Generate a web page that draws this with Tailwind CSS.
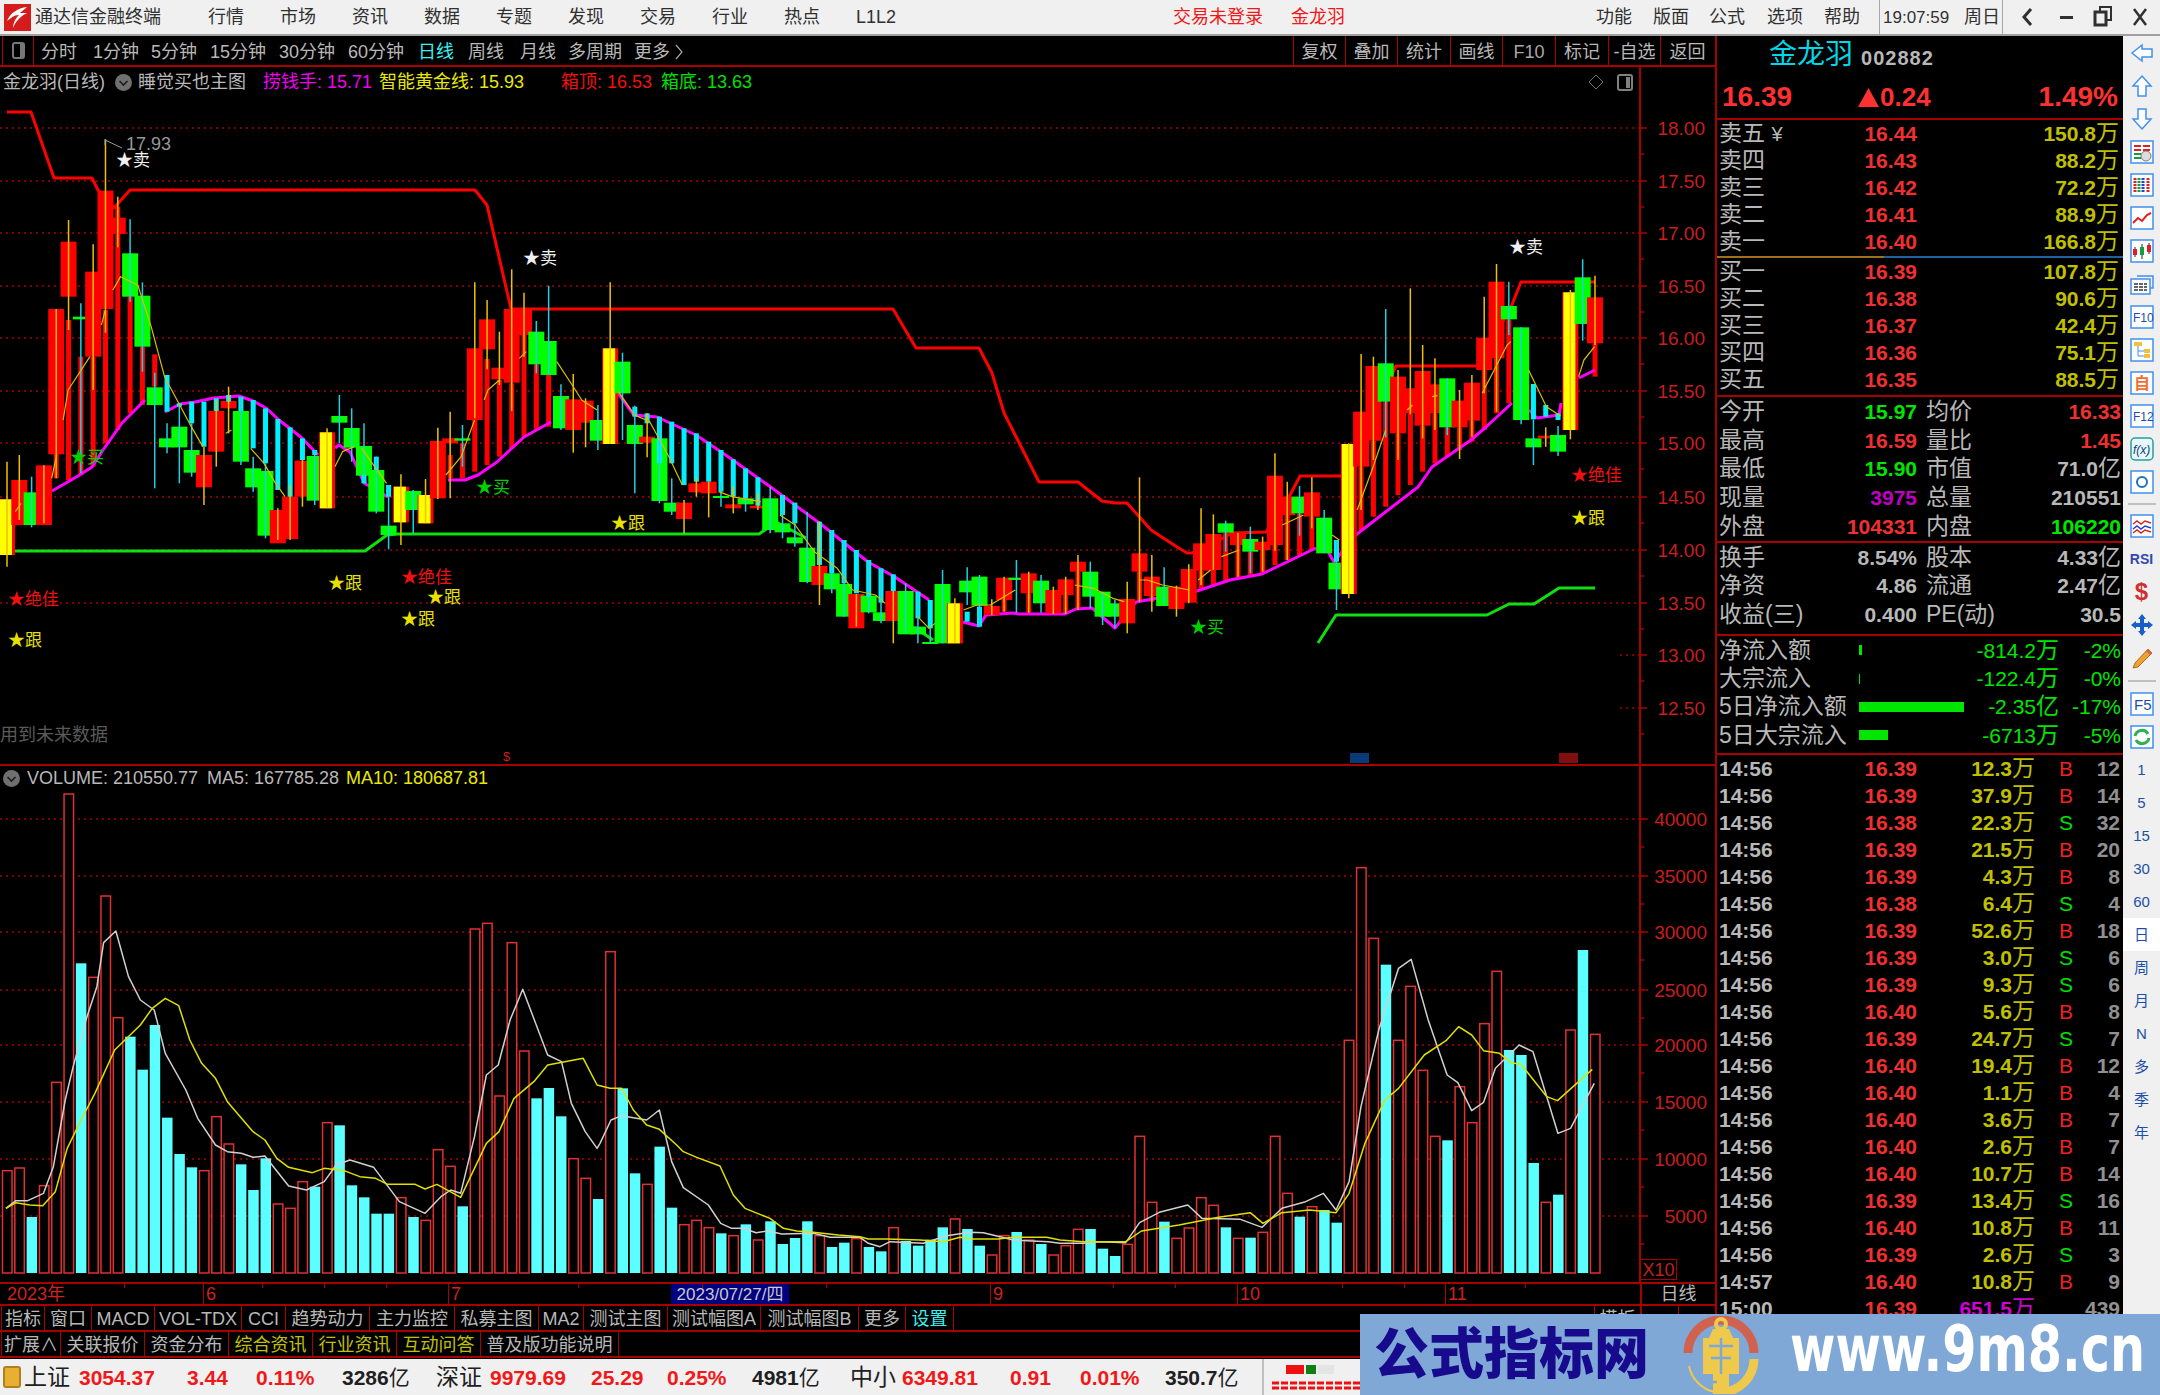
<!DOCTYPE html>
<html>
<head>
<meta charset="utf-8">
<title>通达信金融终端</title>
<script src="https://cdn.jsdelivr.net/npm/@tailwindcss/browser@4"></script>
</head>
<body class="bg-black overflow-hidden">
<div class="relative flex flex-col w-[2160px] h-[1395px] overflow-hidden bg-black text-[#b8b8b8] [font-family:'Liberation_Sans','Noto_Sans_CJK_SC',sans-serif]">

  <!-- title bar -->
  <div class="flex items-center h-[36px] bg-[#f0f0f0] border-b-2 border-[#a0a0a0] text-[18px] text-[#303030] leading-none">
    <svg class="ml-[4px]" width="27" height="27" viewBox="0 0 27 27"><rect width="27" height="27" fill="#d41c1c"/><path d="M23 3C14 4 6 9 3 17L7 14C9 12 12 11 15 11C12 14 9 19 9 24C11 19 15 13 23 9C20 9 18 9 16 9C18 7 21 5 23 3Z" fill="#fff"/></svg>
    <span class="ml-[4px] w-[173px]">通达信金融终端</span>
    <span class="w-[72px]">行情</span><span class="w-[72px]">市场</span><span class="w-[72px]">资讯</span><span class="w-[72px]">数据</span><span class="w-[72px]">专题</span><span class="w-[72px]">发现</span><span class="w-[72px]">交易</span><span class="w-[72px]">行业</span><span class="w-[72px]">热点</span><span class="w-[317px]">L1L2</span>
    <span class="w-[118px] text-[#f01818]">交易未登录</span><span class="w-[305px] text-[#f01818]">金龙羽</span>
    <span class="w-[57px]">功能</span><span class="w-[56px]">版面</span><span class="w-[58px]">公式</span><span class="w-[57px]">选项</span><span class="w-[55px]">帮助</span>
    <span class="h-[34px] w-[85px] pl-[3px] flex items-center border-l border-[#a8a8a8] text-[17px]">19:07:59</span><span class="h-[34px] w-[39px] flex items-center border-r border-[#a8a8a8]">周日</span>
    <svg width="156" height="34" viewBox="0 0 156 34"><path d="M28 9L21 17L28 25" fill="none" stroke="#303030" stroke-width="3"/><rect x="57" y="16" width="13" height="3" fill="#303030"/><rect x="92" y="12" width="11" height="13" fill="none" stroke="#303030" stroke-width="3"/><path d="M97 11V7H108V20H104" fill="none" stroke="#303030" stroke-width="2"/><path d="M131 9L143 25M143 9L131 25" stroke="#303030" stroke-width="2.5"/></svg>
  </div>

  <div class="flex h-[1323px]">
    <!-- left: charts -->
    <div class="flex flex-col w-[1715px]">
      <!-- period toolbar -->
      <div class="flex items-center h-[31px] border-b-2 border-[#a80000] text-[18px] leading-none">
        <span class="flex items-center justify-center ml-[2px] w-[32px] h-[29px] border-x border-[#a80000]"><span class="block w-[13px] h-[17px] rounded-[3px] border-2 border-[#777] border-r-[5px]"></span></span>
        <span class="ml-[7px] w-[52px] pt-[2px]">分时</span><span class="w-[58px] pt-[2px]">1分钟</span><span class="w-[59px] pt-[2px]">5分钟</span><span class="w-[69px] pt-[2px]">15分钟</span><span class="w-[69px] pt-[2px]">30分钟</span><span class="w-[70px] pt-[2px]">60分钟</span><span class="w-[50px] pt-[2px] text-[#3cf0f0]">日线</span><span class="w-[52px] pt-[2px]">周线</span><span class="w-[48px] pt-[2px]">月线</span><span class="w-[66px] pt-[2px]">多周期</span>
        <span class="flex items-center gap-[5px] w-[659px] pt-[2px]">更多<svg width="8" height="18" viewBox="0 0 8 18"><path d="M1 2L7 9L1 16" fill="none" stroke="#a8a8a8" stroke-width="1.2"/></svg></span>
        <span class="flex items-center justify-center w-[52px] h-[29px] pt-[2px] border-l border-[#a80000]">复权</span><span class="flex items-center justify-center w-[52px] h-[29px] pt-[2px] border-l border-[#a80000]">叠加</span><span class="flex items-center justify-center w-[53px] h-[29px] pt-[2px] border-l border-[#a80000]">统计</span><span class="flex items-center justify-center w-[52px] h-[29px] pt-[2px] border-l border-[#a80000]">画线</span><span class="flex items-center justify-center w-[53px] h-[29px] pt-[2px] border-l border-[#a80000] text-[#a8a8a8]">F10</span><span class="flex items-center justify-center w-[53px] h-[29px] pt-[2px] border-l border-[#a80000]">标记</span><span class="flex items-center justify-center w-[52px] h-[29px] pt-[2px] border-l border-[#a80000]">-自选</span><span class="flex items-center justify-center w-[54px] h-[29px] pt-[2px] border-l border-[#a80000]">返回</span>
      </div>

      <!-- price pane -->
      <div class="relative h-[697px]">
        <svg id="price" class="block" width="1715" height="697" viewBox="0 67 1715 697"></svg>
        <div class="absolute left-[3px] top-[5px] flex items-center h-[20px] text-[18px] leading-none whitespace-nowrap">
          <span class="w-[112px]">金龙羽(日线)</span>
          <svg class="mr-[6px]" width="17" height="17" viewBox="0 0 17 17"><circle cx="8.5" cy="8.5" r="8.5" fill="#707070"/><path d="M4.5 7L8.5 11L12.5 7" fill="none" stroke="#1c1c1c" stroke-width="1.6"/></svg>
          <span class="w-[125px]">睡觉买也主图</span>
          <span class="w-[116px] text-[#f000f0]">捞钱手: 15.71</span>
          <span class="w-[182px] text-[#e8e800]">智能黄金线: 15.93</span>
          <span class="w-[100px] text-[#f01010]">箱顶: 16.53</span>
          <span class="text-[#00e000]">箱底: 13.63</span>
        </div>
        <svg class="absolute left-[1587px] top-[5px]" width="48" height="20" viewBox="0 0 48 20"><path d="M9 3L16 10L9 17L2 10Z" fill="none" stroke="#707070"/><rect x="31" y="3" width="14" height="15" rx="2" fill="none" stroke="#808080" stroke-width="2"/><rect x="39" y="5" width="4" height="11" fill="#808080"/></svg>
      </div>

      <!-- volume pane -->
      <div class="relative h-[518px]">
        <svg id="volume" class="block" width="1715" height="518" viewBox="0 764 1715 518"></svg>
        <div class="absolute left-[3px] top-[4px] flex items-center h-[20px] text-[18px] leading-none whitespace-nowrap">
          <svg class="mr-[7px]" width="17" height="17" viewBox="0 0 17 17"><circle cx="8.5" cy="8.5" r="8.5" fill="#707070"/><path d="M4.5 7L8.5 11L12.5 7" fill="none" stroke="#1c1c1c" stroke-width="1.6"/></svg>
          <span class="w-[180px]">VOLUME: 210550.77</span>
          <span class="w-[139px]">MA5: 167785.28</span>
          <span class="text-[#e8e800]">MA10: 180687.81</span>
        </div>
        <span class="absolute left-[1640px] bottom-[2px] flex items-center justify-center w-[37px] h-[21px] border border-[#a80000] text-[18px] leading-none text-[#c02020]">X10</span>
      </div>

      <!-- date axis -->
      <div id="dates" class="relative flex h-[24px] border-y-2 border-[#a80000] text-[18px] leading-none text-[#d02020]">
        <span class="flex items-center w-[203px] pl-[7px]">2023年</span>
        <span class="flex items-center w-[245px] pl-[2px] border-l border-[#a80000]">6</span>
        <span class="flex items-center w-[542px] pl-[2px] border-l border-[#a80000]">7</span>
        <span class="flex items-center w-[247px] pl-[2px] border-l border-[#a80000]">9</span>
        <span class="flex items-center w-[208px] pl-[2px] border-l border-[#a80000]">10</span>
        <span class="flex items-center w-[195px] pl-[2px] border-l border-[#a80000]">11</span>
        <span class="flex items-center justify-center flex-1 border-l-2 border-[#a80000] text-[#b8b8b8]">日线</span>
        <span class="absolute left-[671px] top-0 flex items-center justify-center w-[118px] h-[20px] bg-[#000080] text-[#c8c8c8] text-[17px]">2023/07/27/四</span>
      </div>

      <!-- indicator tabs -->
      <div class="flex h-[26px] border-b-2 border-[#a80000] text-[18px] leading-none">
        <span class="flex items-center justify-center ml-[1px] w-[44px] pt-[2px] border-x border-[#a80000]">指标</span><span class="flex items-center justify-center w-[47px] pt-[2px] border-r border-[#a80000]">窗口</span><span class="flex items-center justify-center w-[63px] pt-[2px] border-r border-[#a80000]">MACD</span><span class="flex items-center justify-center w-[87px] pt-[2px] border-r border-[#a80000]">VOL-TDX</span><span class="flex items-center justify-center w-[44px] pt-[2px] border-r border-[#a80000]">CCI</span><span class="flex items-center justify-center w-[84px] pt-[2px] border-r border-[#a80000]">趋势动力</span><span class="flex items-center justify-center w-[85px] pt-[2px] border-r border-[#a80000]">主力监控</span><span class="flex items-center justify-center w-[84px] pt-[2px] border-r border-[#a80000]">私募主图</span><span class="flex items-center justify-center w-[45px] pt-[2px] border-r border-[#a80000]">MA2</span><span class="flex items-center justify-center w-[84px] pt-[2px] border-r border-[#a80000]">测试主图</span><span class="flex items-center justify-center w-[93px] pt-[2px] border-r border-[#a80000]">测试幅图A</span><span class="flex items-center justify-center w-[98px] pt-[2px] border-r border-[#a80000]">测试幅图B</span><span class="flex items-center justify-center w-[47px] pt-[2px] border-r border-[#a80000]">更多</span><span class="flex items-center justify-center w-[48px] pt-[2px] border-r border-[#a80000] text-[#3cf0f0]">设置</span>
        <span class="flex items-center justify-center ml-auto w-[46px] pt-[2px] border-l border-[#a80000]">模板</span><span class="flex items-center justify-center w-[38px] pt-[2px] border-l-2 border-[#a80000]">+</span><span class="w-[37px] border-l border-[#a80000]"></span>
      </div>
      <div class="flex h-[26px] border-b-2 border-[#a80000] text-[18px] leading-none">
        <span class="flex items-center justify-center ml-[1px] w-[60px] pt-[2px] border-x border-[#a80000]">扩展∧</span><span class="flex items-center justify-center w-[84px] pt-[2px] border-r border-[#a80000]">关联报价</span><span class="flex items-center justify-center w-[84px] pt-[2px] border-r border-[#a80000]">资金分布</span><span class="flex items-center justify-center w-[84px] pt-[2px] border-r border-[#a80000] text-[#c0c000]">综合资讯</span><span class="flex items-center justify-center w-[84px] pt-[2px] border-r border-[#a80000] text-[#c0c000]">行业资讯</span><span class="flex items-center justify-center w-[84px] pt-[2px] border-r border-[#a80000] text-[#c0c000]">互动问答</span><span class="flex items-center justify-center w-[138px] pt-[2px] border-r border-[#a80000]">普及版功能说明</span>
      </div>
    </div>

    <!-- right: quote panel -->
    <div class="w-[408px] overflow-hidden border-l-2 border-[#a80000]">
      <div class="flex items-center h-[38px] pl-[52px] leading-none">
        <span class="text-[28px] text-[#00d8e8]">金龙羽</span><span class="ml-[8px] mt-[6px] text-[20px] font-bold tracking-[1px]">002882</span>
      </div>
      <div class="flex items-center h-[46px] pr-[5px] pl-[5px] pt-[2px] border-b-2 border-[#a80000] text-[28px] font-bold leading-none text-[#ff3030]">
        <span class="w-[136px]">16.39</span><svg class="mr-[1px]" width="21" height="20" viewBox="0 0 21 20"><path d="M10.5 1L21 20H0Z" fill="#ff3030"/></svg><span class="text-[26px]">0.24</span><span class="ml-auto">1.49%</span>
      </div>
      <div id="asks" class="h-[136px]"></div>
      <div class="flex h-[2px]"><span class="w-[167px] bg-[#a07020]"></span><span class="flex-1 bg-[#2060a0]"></span></div>
      <div id="bids" class="h-[139px] border-b-2 border-[#a80000]"></div>
      <div id="stats1" class="h-[146px] border-b-2 border-[#a80000]"></div>
      <div id="stats2" class="h-[93px] border-b-2 border-[#a80000]"></div>
      <div id="flows" class="h-[119px] border-b-2 border-[#a80000]"></div>
      <div id="ticks"></div>
    </div>

    <!-- right: icon strip -->
    <div class="flex flex-col items-center w-[37px] bg-[#f0f0f0] text-[15px] leading-none text-[#1c50a8]">
      <span class="flex items-center justify-center h-[33px]"><svg width="24" height="24" viewBox="0 0 24 24"><path d="M2 12L12 4V8H22V16H12V20Z" fill="#fff" stroke="#4090f0" stroke-width="1.5"/></svg></span>
      <span class="flex items-center justify-center h-[33px]"><svg width="24" height="24" viewBox="0 0 24 24"><path d="M12 2L21 12H16V22H8V12H3Z" fill="#fff" stroke="#4090f0" stroke-width="1.5"/></svg></span>
      <span class="flex items-center justify-center h-[33px]"><svg width="24" height="24" viewBox="0 0 24 24"><path d="M12 22L21 12H16V2H8V12H3Z" fill="#fff" stroke="#4090f0" stroke-width="1.5"/></svg></span>
      <span class="flex items-center justify-center h-[33px]"><svg width="24" height="24" viewBox="0 0 24 24"><rect x="1" y="1" width="22" height="22" fill="#fff" stroke="#4090f0" stroke-width="1.5"/><path d="M4 6H11M13 6H20M4 10H11M13 10H20" stroke="#e02020" stroke-width="2"/><path d="M4 14H11M4 18H11" stroke="#10a040" stroke-width="2"/><circle cx="16" cy="16" r="5" fill="#ddd" stroke="#777"/></svg></span>
      <span class="flex items-center justify-center h-[33px]"><svg width="24" height="24" viewBox="0 0 24 24"><rect x="1" y="1" width="22" height="22" fill="#fff" stroke="#4090f0" stroke-width="1.5"/><path d="M5 5V19" stroke="#e02020" stroke-width="3" stroke-dasharray="2 1"/><path d="M9 5V19" stroke="#10a040" stroke-width="3" stroke-dasharray="2 1"/><path d="M13 5V19" stroke="#2040d0" stroke-width="3" stroke-dasharray="2 1"/><path d="M18 5V19" stroke="#e02020" stroke-width="3" stroke-dasharray="2 1"/></svg></span>
      <span class="flex items-center justify-center h-[33px]"><svg width="24" height="24" viewBox="0 0 24 24"><rect x="1" y="1" width="22" height="22" fill="#fff" stroke="#4090f0" stroke-width="1.5"/><path d="M3 17L8 12L12 15L17 9L21 7" fill="none" stroke="#e02020" stroke-width="2"/></svg></span>
      <span class="flex items-center justify-center h-[33px]"><svg width="24" height="24" viewBox="0 0 24 24"><rect x="1" y="1" width="22" height="22" fill="#fff" stroke="#4090f0" stroke-width="1.5"/><path d="M5 8V18M12 5V20M19 4V15" stroke="#222"/><rect x="3" y="10" width="4" height="6" fill="#e02020"/><rect x="10" y="8" width="4" height="8" fill="#10a040"/><rect x="17" y="6" width="4" height="7" fill="#e02020"/></svg></span>
      <span class="flex items-center justify-center h-[33px]"><svg width="24" height="24" viewBox="0 0 24 24"><path d="M7 4H23V16H20" fill="none" stroke="#4090f0" stroke-width="1.5"/><rect x="1" y="7" width="19" height="15" fill="#fff" stroke="#4090f0" stroke-width="1.5"/><path d="M4 12H17M4 15H17M4 18H17" stroke="#666" stroke-width="2" stroke-dasharray="4 1"/></svg></span>
      <span class="flex items-center justify-center h-[33px]"><svg width="24" height="24" viewBox="0 0 24 24"><rect x="1" y="1" width="22" height="22" fill="#fff" stroke="#4090f0" stroke-width="1.5"/><text x="3" y="17" font-size="12" fill="#1c50a8">F10</text></svg></span>
      <span class="flex items-center justify-center h-[33px]"><svg width="24" height="24" viewBox="0 0 24 24"><rect x="1" y="1" width="22" height="22" fill="#fff" stroke="#4090f0" stroke-width="1.5"/><path d="M8 8V18H14M8 13H14" fill="none" stroke="#4090f0"/><rect x="4" y="4" width="8" height="4" fill="#f0c040"/><rect x="14" y="11" width="6" height="4" fill="#f0c040"/><rect x="14" y="16" width="6" height="4" fill="#f0c040"/></svg></span>
      <span class="flex items-center justify-center h-[33px]"><svg width="24" height="24" viewBox="0 0 24 24"><rect x="1" y="1" width="22" height="22" fill="#fff" stroke="#4090f0" stroke-width="1.5"/><text x="4" y="18" font-size="16" font-weight="bold" fill="#f07030">自</text></svg></span>
      <span class="flex items-center justify-center h-[33px]"><svg width="24" height="24" viewBox="0 0 24 24"><rect x="1" y="1" width="22" height="22" fill="#fff" stroke="#4090f0" stroke-width="1.5"/><text x="3" y="17" font-size="12" fill="#1c50a8">F12</text></svg></span>
      <span class="flex items-center justify-center h-[33px]"><svg width="24" height="24" viewBox="0 0 24 24"><rect x="1" y="1" width="22" height="22" rx="4" fill="#e8f8f8" stroke="#20a0a0" stroke-width="1.5"/><text x="3" y="17" font-size="12" font-style="italic" fill="#104080">f(x)</text></svg></span>
      <span class="flex items-center justify-center h-[33px]"><svg width="24" height="24" viewBox="0 0 24 24"><rect x="1" y="1" width="22" height="22" fill="#fff" stroke="#4090f0" stroke-width="1.5"/><circle cx="12" cy="12" r="5" fill="none" stroke="#2070c0" stroke-width="2"/></svg></span>
      <span class="flex items-center h-[11px]"><span class="block w-[28px] h-[2px] bg-[#c0c0c0]"></span></span>
      <span class="flex items-center justify-center h-[33px]"><svg width="24" height="24" viewBox="0 0 24 24"><rect x="1" y="1" width="22" height="22" fill="#fff" stroke="#4090f0" stroke-width="1.5"/><path d="M3 10L7 7L11 10L15 7L21 9" fill="none" stroke="#e02020" stroke-width="1.5"/><path d="M3 15L7 12L11 15L15 12L21 14" fill="none" stroke="#2040d0" stroke-width="1.5"/><path d="M3 19L7 16L11 19L15 16L21 18" fill="none" stroke="#e02020" stroke-width="1.5"/></svg></span>
      <span class="flex items-center justify-center h-[33px] text-[14px] font-bold text-[#3048b0]">RSI</span>
      <span class="flex items-center justify-center h-[33px] text-[24px] font-bold text-[#d03030]">$</span>
      <span class="flex items-center justify-center h-[33px]"><svg width="24" height="24" viewBox="0 0 24 24"><path d="M12 1L16 6H14V10H18V8L23 12L18 16V14H14V18H16L12 23L8 18H10V14H6V16L1 12L6 8V10H10V6H8Z" fill="#1860c8"/></svg></span>
      <span class="flex items-center justify-center h-[33px]"><svg width="24" height="24" viewBox="0 0 24 24"><path d="M5 17L18 3L22 7L8 21L3 22Z" fill="#f0a030" stroke="#a87020"/><path d="M18 3L22 7L20 9L16 5Z" fill="#e06050"/></svg></span>
      <span class="flex items-center h-[13px]"><span class="block w-[28px] h-[2px] bg-[#c0c0c0]"></span></span>
      <span class="flex items-center justify-center h-[33px]"><svg width="24" height="24" viewBox="0 0 24 24"><rect x="1" y="1" width="22" height="22" fill="#fff" stroke="#4090f0" stroke-width="1.5"/><text x="4" y="18" font-size="15" fill="#1c50a8">F5</text></svg></span>
      <span class="flex items-center justify-center h-[33px]"><svg width="24" height="24" viewBox="0 0 24 24"><rect x="1" y="1" width="22" height="22" fill="#fff" stroke="#4090f0" stroke-width="1.5"/><path d="M5 11A7 7 0 0 1 18 9M19 13A7 7 0 0 1 6 15" fill="none" stroke="#30b050" stroke-width="3"/></svg></span>
      <span class="flex items-center justify-center h-[33px]">1</span>
      <span class="flex items-center justify-center h-[33px]">5</span>
      <span class="flex items-center justify-center h-[33px]">15</span>
      <span class="flex items-center justify-center h-[33px]">30</span>
      <span class="flex items-center justify-center h-[33px]">60</span>
      <span class="flex items-center justify-center w-full h-[33px] bg-white">日</span>
      <span class="flex items-center justify-center h-[33px]">周</span>
      <span class="flex items-center justify-center h-[33px]">月</span>
      <span class="flex items-center justify-center h-[33px]">N</span>
      <span class="flex items-center justify-center h-[33px]">多</span>
      <span class="flex items-center justify-center h-[33px]">季</span>
      <span class="flex items-center justify-center h-[33px]">年</span>
    </div>
  </div>

  <!-- index status bar -->
  <div class="flex items-center h-[36px] bg-[#f0f0f0] text-[21px] font-bold leading-none text-[#f01818] whitespace-nowrap">
    <span class="w-[24px] pl-[3px]"><span class="block w-[18px] h-[22px] rounded-[3px] bg-[#e8b030] border-2 border-[#b08020]"></span></span>
    <span class="w-[55px] text-[23px] font-normal text-[#202020]">上证</span><span class="w-[108px]">3054.37</span><span class="w-[69px]">3.44</span><span class="w-[86px]">0.11%</span><span class="w-[94px] text-[#202020]">3286<span class="font-normal">亿</span></span>
    <span class="w-[54px] text-[23px] font-normal text-[#202020]">深证</span><span class="w-[101px]">9979.69</span><span class="w-[76px]">25.29</span><span class="w-[85px]">0.25%</span><span class="w-[98px] text-[#202020]">4981<span class="font-normal">亿</span></span>
    <span class="w-[52px] text-[23px] font-normal text-[#202020]">中小</span><span class="w-[108px]">6349.81</span><span class="w-[70px]">0.91</span><span class="w-[85px]">0.01%</span><span class="w-[97px] text-[#202020]">350.7<span class="font-normal">亿</span></span>
    <span class="flex h-full border-l-2 border-[#c0c0c0]"><svg width="98" height="36" viewBox="0 0 98 36"><rect x="22" y="6" width="18" height="9" fill="#f01010"/><rect x="42" y="6" width="10" height="9" fill="#108010"/><rect x="54" y="6" width="16" height="9" fill="#e4e4e4"/><path d="M8 24H96M8 29H96" stroke="#f01010" stroke-width="3" stroke-dasharray="7 2"/></svg></span>
  </div>

  <!-- site banner over the corner -->
  <div class="absolute left-[1360px] top-[1314px] flex items-center w-[800px] h-[81px] bg-[#7fa8d6] leading-none whitespace-nowrap">
    <span class="shrink-0 ml-[14px] w-[309px] text-[55px] font-black text-[#170a8c]">公式指标网</span>
    <svg class="shrink-0" width="76" height="78" viewBox="0 0 76 78"><path d="M5 37A33 33 0 0 1 71 37" fill="none" stroke="#d0634f" stroke-width="9"/><path d="M71 43A33 33 0 0 1 38 76" fill="none" stroke="#eec94b" stroke-width="9"/><path d="M32 76A33 33 0 0 1 6 50" fill="none" stroke="#eec94b" stroke-width="2"/><circle cx="38" cy="8" r="5" fill="none" stroke="#eec94b" stroke-width="4"/><path d="M30 13H46L50 22H56V58H46V78H30V58H20V22H26Z" fill="#eec94b"/><path d="M26 30H50M28 42H48M38 22V58M26 66H34" stroke="#7fa8d6" stroke-width="2.5"/></svg>
    <span class="shrink-0 ml-[31px] mb-[12px] text-[64px] font-bold text-white [font-family:'DejaVu_Sans',sans-serif] scale-x-[.77] origin-left">www.9m8.cn</span>
  </div>
</div>

<script>
  // pixel helpers, values below were read off 3x crops of the chart
  const barX = i => 2 + 12.31 * i
  const midX = i => barX(i) + 5
  const txt = (x, y, s, fill, size, anchor) => `<text x="${x}" y="${y}" fill="${fill}" font-size="${size}" text-anchor="${anchor || 'start'}">${s}</text>`
  const rect = (x, y, w, h, fill) => `<rect x="${x}" y="${y}" width="${w}" height="${Math.max(h, 2)}" fill="${fill}"/>`
  const vline = (x, a, b, col, w) => `<line x1="${x}" x2="${x}" y1="${a}" y2="${b}" stroke="${col}" stroke-width="${w}"/>`
  const line = (pts, col, w) => `<polyline points="${pts.map(p => p.join(',')).join(' ')}" fill="none" stroke="${col}" stroke-width="${w}" stroke-linejoin="round"/>`
  const dots = (a, b, y) => `<line x1="${a}" x2="${b}" y1="${y}" y2="${y}" stroke="#a80000" stroke-width="1.5" stroke-dasharray="2 4"/>`
  const crop = (pts, x0, sx, y0) => pts.map(p => [x0 + p[0] / sx, y0 + p[1] / 3])

  // candles: index, type, body top, body bottom, wick top, wick bottom
  const c7 = [[0,'y',1228,1395,1115,1430],[1,'r',1170,1305,1095,1290],[2,'g',1207,1305,1160,1312],[3,'r',1126,1305,1126,1300],[4,'r',657,1093,657,1165],[5,'r',455,620,390,720],[6,'g',680,688,640,1150],[7,'r',545,800,463,900],[8,'r',302,657,148,728],[9,'r',383,432,320,472],[10,'g',490,620,388,635],[11,'g',617,770,577,845],[12,'g',892,945,848,1195],[13,'g',1045,1072,1000,1090],[14,'g',1010,1072,940,1180],[15,'g',1080,1148,1000,1160],[16,'r',1095,1192,1070,1245],[17,'r',963,1085,930,1130],[18,'r',933,955,890,1030],[19,'g',963,1115,920,1125],[20,'g',1135,1192,1100,1205],[21,'g',1143,1337,1120,1345],[22,'r',1260,1360,1255,1350],[23,'r',1220,1347,1185,1350],[24,'r',1112,1220,1110,1250],[25,'g',1098,1232,1080,1245],[26,'y',1027,1255,1015,1255],[27,'g',978,998,915,1060],[28,'g',1014,1073,955,1115],[29,'g',1068,1157,1000,1175],[30,'g',1140,1265,1100,1270],[31,'g',1307,1335,1185,1378],[32,'y',1190,1297,1153,1365],[33,'g',1203,1260,1200,1330],[34,'y',1215,1300,1167,1300],[35,'r',1053,1225,1013,1227],[36,'r',1045,1060,965,1225],[37,'g',1045,1052,1005,1130],[38,'r',775,990,577,985],[39,'r',688,778,630,838],[40,'r',833,868,725,885],[41,'r',657,878,538,963],[42,'r',657,735,608,800],[43,'g',725,823,693,850],[44,'g',753,855,587,855],[45,'g',918,1015,883,1020],[46,'r',928,1020,852,1088],[47,'r',932,998,925,1072],[48,'g',990,1052,945,1080]]
  const c8 = [[49,'y',325,612,127,612],[50,'g',365,460,338,600],[51,'g',555,612,497,760],[52,'r',590,608,520,652],[53,'g',595,783,530,790],[54,'g',788,815,715,825],[55,'r',788,837,780,880],[56,'r',730,757,715,770],[57,'r',725,760,725,832],[58,'g',768,772,730,800],[59,'r',793,805,740,820],[60,'g',775,793,775,815],[61,'r',797,805,760,810],[62,'g',775,870,740,880],[63,'g',850,877,765,895],[64,'g',892,910,788,920],[65,'g',923,1026,815,1030],[66,'r',978,1035,845,1095],[67,'g',1000,1048,870,1060],[68,'g',1032,1130,900,1130],[69,'r',1062,1165,1062,1160],[70,'g',1067,1117,960,1120],[71,'g',1117,1143,985,1150],[72,'r',1053,1143,1053,1210],[73,'g',1053,1183,1030,1180],[74,'g',1160,1183,1055,1210],[75,'g',1206,1210,1160,1210],[76,'g',1032,1210,990,1210],[77,'y',1090,1210,1075,1210],[78,'g',1022,1057,982,1095],[79,'g',1010,1097,1005,1160],[80,'r',1098,1125,1078,1125],[81,'r',1013,1080,1010,1115],[82,'g',1013,1020,960,1118],[83,'r',1000,1060,995,1118],[84,'g',1022,1090,1005,1118],[85,'r',1050,1120,1040,1122],[86,'r',1018,1065,1010,1122],[87,'r',965,995,945,1110],[88,'g',995,1070,965,1105],[89,'g',1055,1130,1055,1155],[90,'g',1090,1130,1080,1165],[91,'r',1077,1150,1025,1180],[92,'r',940,995,712,1085],[93,'r',1010,1068,945,1115],[94,'g',1040,1098,982,1095],[95,'r',1040,1107,1037,1130],[96,'r',987,1088,973,1090]]
  const c9 = [[97,'r',940,1022,835,1065],[98,'r',912,1020,853,1020],[99,'g',880,908,872,965],[100,'r',912,945,908,1040],[101,'g',927,965,890,1030],[102,'r',935,960,920,1025],[103,'r',737,945,670,962],[104,'r',800,855,755,990],[105,'g',800,850,768,917],[106,'r',787,860,742,895],[107,'g',863,970,840,970],[108,'g',998,1078,930,1140],[109,'y',642,1092,640,1105],[110,'r',545,710,372,840],[111,'r',408,632,380,690],[112,'g',400,515,237,622],[113,'r',440,610,420,690],[114,'r',475,550,175,553],[115,'r',423,587,345,625],[116,'r',463,550,385,600],[117,'g',445,592,445,615],[118,'r',512,592,480,687],[119,'r',458,572,435,620],[120,'r',323,420,200,490],[121,'r',155,385,102,545],[122,'g',228,268,155,315],[123,'g',292,570,292,583],[124,'g',625,652,568,705],[125,'r',617,625,592,650],[126,'g',615,665,588,678],[127,'y',187,600,180,628],[128,'g',142,282,88,332],[129,'r',202,340,137,345]]

  // thin bars between the candles and the magenta line
  const red7 = [[4,1090,1165],[5,690,1170],[6,800,1155],[7,800,1130],[8,660,1060],[9,350,1020],[10,620,970],[11,770,945],[12,793,890],[36,1095,1165],[37,1060,1165],[38,990,1145],[39,807,1125],[40,870,1100],[41,880,1075],[42,735,1040],[43,823,1020],[44,855,1010]]
  const red8 = [[81,1080,1115],[83,1060,1118],[85,1100,1122],[86,1065,1122],[87,995,1110],[92,995,1085],[93,1068,1085]]
  const red9 = [[97,1022,1075],[98,1020,1065],[99,908,1055],[100,945,1048],[101,965,1040],[102,960,1030],[103,945,1005],[104,855,990],[105,850,975],[106,860,960],[110,710,900],[111,632,860],[112,515,830],[113,610,795],[114,550,765],[115,587,725],[116,550,700],[117,592,680],[118,592,660],[119,572,635],[120,420,600],[121,385,550],[122,268,520],[129,340,440]]
  const cyan7 = [[13,855,965],[14,940,950],[15,935,1000],[16,935,1070],[17,925,963],[18,915,935],[19,920,963],[20,930,1075],[21,955,1120],[22,987,1200],[23,1012,1220],[24,1045,1110],[25,1080,1095],[29,1155,1180],[30,1100,1140],[31,1185,1220]]
  const cyan8 = [[51,500,530],[52,520,550],[53,530,670],[54,545,670],[55,565,735],[56,580,725],[57,605,725],[58,630,755],[59,658,770],[60,685,775],[61,712,797],[63,765,825],[64,788,850],[66,845,975],[67,870,1000],[68,900,1030],[69,930,1060],[70,960,1070],[71,985,1088],[72,1003,1053],[74,1055,1135],[75,1080,1165],[78,1115,1145],[79,1100,1160]]
  const cyan9 = [[108,930,995],[124,462,568],[125,525,560],[126,550,570]]

  const upper = [[7,112],[31,112],[54,178],[92,178],[98,190],[114,208],[130,190],[475,190],[487,205],[511,309],[893,309],[916,348],[979,348],[992,373],[1004,413],[1039,482],[1078,482],[1102,501],[1115,503],[1127,503],[1151,530],[1177,547],[1187,553],[1192,553],[1223,538],[1232,533],[1266,532],[1289,497],[1300,476],[1343,476],[1396,366],[1477,366],[1511,307],[1521,282],[1595,282]]
  const magenta = [
    [[52,491],[78,476],[92,467],[103,450],[122,423],[145,400]],
    [[165,412],[180,404],[195,402],[214,398],[239,396],[253,401],[266,408],[279,420],[302,438],[318,455]],
    [[335,448],[339,445],[350,452],[364,483],[388,497]],
    [[448,480],[465,480],[478,475],[497,462],[524,437],[551,422]],
    [[618,393],[634,415],[657,417],[696,435],[730,458],[772,488],[822,525],[868,562],[895,577],[929,600]],
    [[963,622],[979,626],[986,615],[1013,613],[1019,614],[1065,614],[1076,609],[1092,608],[1115,628],[1136,602],[1153,599],[1197,591],[1230,580],[1262,574],[1316,548]],
    [[1327,550],[1334,562],[1345,548],[1357,534],[1379,517],[1418,487],[1432,467],[1471,440],[1486,427],[1512,403]],
    [[1529,410],[1537,418],[1559,415],[1561,403]],
    [[1579,378],[1595,370]]
  ]
  const green = [
    [[15,551],[365,551],[387,535],[398,534],[759,534],[768,528],[778,523],[806,538]],
    [[914,627],[933,640]],
    [[1318,643],[1336,615],[1487,615],[1509,604],[1534,604],[1559,588],[1595,588]]
  ]
  const ma7 = [[[40,1265],[55,1240]],[[135,1165],[148,1095]],[[165,990],[178,900],[235,800]],[[265,705],[275,660]],[[295,600],[315,560],[360,585],[395,710],[430,860],[495,1000],[530,1070]],[[590,1030],[605,1020]],[[655,1075],[690,1120],[720,1180],[745,1220]],[[875,1130],[895,1085],[925,1070]],[[945,1075],[1010,1180]],[[1165,1155],[1205,1100],[1240,990]],[[1265,930],[1275,900],[1305,870]],[[1357,805],[1375,785]],[[1455,815],[1495,885],[1520,930],[1560,960]]]
  const ma8 = [[[48,455],[90,525],[130,545],[180,650],[215,735]],[[310,755],[345,770],[420,785]],[[470,825],[510,855],[560,935],[620,985],[660,1050],[720,1065],[745,1090]],[[830,1130],[860,1165],[875,1150]],[[950,1110],[985,1095],[1020,1095],[1085,1050]],[[1240,1035],[1290,1045],[1340,1075],[1370,1085]],[[1410,1020],[1430,1020],[1470,1035],[1540,1050]]]
  const ma9 = [[[135,1050],[170,1020]],[[200,980],[250,960]],[[370,885],[430,855]],[[510,915],[530,930]],[[580,840],[625,710],[660,600]],[[720,540],[735,525]],[[790,500],[805,497]],[[930,490],[1000,345],[1010,335]],[[1060,420],[1110,530],[1150,558]],[[1200,440],[1215,390],[1245,350]]]

  // price pane
  let s = ''
  const grid = [128,181,233,286,338,391,443,497,550,603,655,708]
  grid.forEach((y, n) => {
    if (y < 600) s += dots(0, 1640, y)
    if (y == 603) s += dots(0, 814, y) + dots(1196, 1640, y)
    if (y > 650) s += dots(1620, 1640, y)
    s += txt(1705, y + 7, (18 - n * 0.5).toFixed(2), '#c81e1e', 19, 'end')
    s += `<line x1="1640" x2="1647" y1="${y}" y2="${y}" stroke="#a80000" stroke-width="1.5"/><line x1="1640" x2="1644" y1="${y + 26}" y2="${y + 26}" stroke="#a80000" stroke-width="1.5"/>`
  })
  s += line(upper, '#ff0000', 3)
  green.forEach(p => s += line(p, '#10e010', 3))
  const redBand = (list, y0) => list.forEach(b => s += rect(midX(b[0]) - 2.5, y0 + b[1] / 3, 5, (b[2] - b[1]) / 3, '#ff0000'))
  redBand(red7, 90); redBand(red8, 240); redBand(red9, 230)
  magenta.forEach(p => s += line(p, '#ff00ff', 3))
  const candles = (list, y0) => list.forEach(c => {
    const x = midX(c[0]), top = y0 + c[2] / 3, h = (c[3] - c[2]) / 3
    if (c[1] == 'r') s += rect(x - 8, top, 16, h, '#ff0000')
    if (c[1] == 'g') s += rect(x - 8, top, 16, h, '#00ff00')
    if (c[1] == 'y') s += rect(x - 8, top, 16, h, '#ff0000') + rect(x - 7, top, 12, h, '#ffff00')
  })
  candles(c7, 90); candles(c8, 240); candles(c9, 230)
  const cyanBand = (list, y0) => list.forEach(b => s += rect(midX(b[0]) - 2.5, y0 + b[1] / 3, 5, (b[2] - b[1]) / 3, '#00f0ff'))
  cyanBand(cyan7, 90); cyanBand(cyan8, 240); cyanBand(cyan9, 230)
  const wicks = (list, y0) => list.forEach(c => s += vline(midX(c[0]), y0 + c[4] / 3, y0 + c[5] / 3, c[1] == 'g' ? '#20d0e0' : '#f0c000', 1.5))
  wicks(c7, 90); wicks(c8, 240); wicks(c9, 230)
  ma7.forEach(p => s += line(crop(p, 0, 2.613, 90), '#d8c000', 1.2))
  ma8.forEach(p => s += line(crop(p, 600, 2.613, 240), '#d8c000', 1.2))
  ma9.forEach(p => s += line(crop(p, 1150, 2.8, 230), '#d8c000', 1.2))
  s += '<path d="M105 139V145M105 140L122 148" fill="none" stroke="#999"/>' + txt(126, 150, '17.93', '#999', 18)
  ;[[116,166,'★卖','#f0f0f0'],[523,264,'★卖','#f0f0f0'],[1509,253,'★卖','#f0f0f0'],[70,463,'★买','#00d000'],[476,493,'★买','#00d000'],[1190,633,'★买','#00d000'],[328,589,'★跟','#e8e000'],[8,646,'★跟','#e8e000'],[427,603,'★跟','#e8e000'],[401,625,'★跟','#e8e000'],[611,529,'★跟','#e8e000'],[1571,524,'★跟','#e8e000'],[401,583,'★绝佳','#f01010'],[8,605,'★绝佳','#f01010'],[1571,481,'★绝佳','#f01010']].forEach(l => s += txt(l[0], l[1], l[2], l[3], 17))
  s += txt(0, 741, '用到未来数据', '#5a5a5a', 18)
  s += txt(503, 761, '$', '#c02020', 13) + rect(1350, 753, 19, 10, '#0a3a78') + rect(1559, 753, 19, 10, '#801010')
  s += vline(1640, 67, 764, '#a80000', 2)
  document.getElementById('price').innerHTML = s

  // volume pane, tops in crop pixels over a base at 1540, minus means a cyan bar
  const vol = [1232,1224,-1371,1277,967,102,-610,652,408,773,-830,-929,-795,-1073,-1182,-1222,1232,1070,1152,-1213,-1290,-1195,1332,1345,1265,-1280,1088,-1096,-1276,-1312,-1361,-1361,1313,-1371,1381,1169,1219,-1339,507,490,1008,548,873,-1015,-984,-1069,1196,1255,-1317,575,-985,-1240,1273,-1160,-1343,1394,1381,1403,-1420,1427,-1393,1440,-1384,-1452,-1434,-1384,1427,-1461,-1448,1436,-1461,-1474,1403,-1443,-1457,-1439,-1402,1377,-1407,-1457,1485,1427,-1416,1440,-1452,1485,1457,1408,-1407,-1466,-1488,1453,1129,1327,-1385,1435,1404,1313,1336,-1402,1435,-1433,1417,1129,1300,-1370,1340,-1350,-1388,841,323,535,-614,841,679,931,1129,-1141,980,1088,791,634,-870,-885,-1209,1327,-1304,810,-570,823]
  let v = ''
  ;[1216,1159,1102,1045,990,932,876,819].forEach((y, n) => {
    v += dots(0, 1640, y) + txt(1707, y + 7, (n + 1) * 5000, '#c81e1e', 19, 'end')
    v += `<line x1="1640" x2="1648" y1="${y}" y2="${y}" stroke="#a80000" stroke-width="1.5"/><line x1="1640" x2="1644" y1="${y + 28}" y2="${y + 28}" stroke="#a80000" stroke-width="1.5"/>`
  })
  vol.forEach((t, i) => {
    const top = 760 + Math.abs(t) / 3
    if (t < 0) v += `<rect x="${barX(i)}" y="${top}" width="10.5" height="${1273 - top}" fill="#5cffff"/>`
    else v += `<rect x="${barX(i) + 0.5}" y="${top}" width="9.5" height="${1273 - top}" fill="#000" stroke="#e03030" stroke-width="1.5"/>`
  })
  const white = crop([[15,1345],[40,1322],[70,1322],[110,1300],[135,1220],[165,1020],[185,920],[220,770],[245,680],[262,548],[293,513],[325,650],[355,720],[390,750],[418,880],[470,990],[500,1075],[545,1155],[575,1175],[610,1180],[640,1192],[670,1188],[730,1278],[775,1290],[820,1265],[850,1215],[885,1200],[945,1222],[1010,1325],[1075,1360],[1115,1310],[1140,1290],[1165,1300],[1200,1130],[1230,945],[1260,915],[1290,780],[1322,688],[1385,885],[1420,905],[1445,1030],[1480,1115],[1510,1165]], 0, 2.529, 760)
    .concat(crop([[0,1150],[33,1080],[65,1067],[140,1080],[178,1050],[215,1205],[250,1283],[325,1335],[362,1390],[395,1405],[430,1405],[468,1418],[505,1413],[545,1422],[640,1420],[690,1432],[780,1432],[805,1450],[840,1460],[870,1445],[970,1450],[1040,1427],[1110,1417],[1150,1418],[1200,1430],[1240,1440],[1345,1445],[1380,1450],[1450,1450]], 600, 3, 760))
    .concat(crop([[0,1445],[65,1448],[100,1388],[150,1357],[222,1335],[258,1375],[355,1378],[410,1402],[460,1345],[520,1325],[565,1300],[597,1350],[630,1265],[660,1040],[705,810],[755,625],[787,598],[830,780],[878,945],[905,968],[940,1052],[970,1027],[1000,925],[1060,855],[1095,875],[1158,1120],[1190,1105],[1250,970]], 1100, 2.529, 760))
  const yellow = crop([[15,1345],[40,1328],[75,1335],[108,1337],[140,1295],[170,1165],[205,1080],[240,1000],[290,870],[355,795],[385,745],[418,715],[452,737],[480,840],[510,910],[545,955],[575,1025],[640,1115],[670,1140],[700,1195],[730,1222],[790,1238],[820,1225],[870,1232],[910,1250],[950,1255],[980,1273],[1050,1273],[1075,1287],[1105,1273],[1165,1312],[1230,1150],[1262,1115],[1300,1015],[1350,965],[1385,915],[1475,895],[1510,975]], 0, 2.529, 760)
    .concat(crop([[0,977],[30,985],[65,985],[100,1050],[140,1095],[178,1108],[230,1155],[250,1175],[290,1192],[360,1218],[400,1305],[435,1345],[510,1375],[550,1405],[590,1413],[640,1417],[715,1425],[780,1430],[805,1437],[860,1437],[960,1440],[1030,1445],[1080,1432],[1120,1437],[1195,1437],[1240,1432],[1340,1432],[1380,1440],[1450,1445]], 600, 3, 760))
    .concat(crop([[0,1445],[65,1445],[105,1413],[200,1395],[300,1372],[380,1358],[412,1390],[460,1358],[530,1350],[597,1358],[630,1300],[670,1150],[720,1020],[755,985],[820,885],[875,842],[907,800],[940,825],[970,872],[1010,880],[1040,908],[1065,913],[1130,1010],[1157,1022],[1245,928]], 1100, 2.529, 760))
  v += line(white, '#d0d0d0', 1.5) + line(yellow, '#e0e000', 1.5)
  v += `<line x1="0" x2="1715" y1="765" y2="765" stroke="#a80000" stroke-width="2"/>` + vline(1640, 764, 1282, '#a80000', 2)
  document.getElementById('volume').innerHTML = v

  // short ticks under the top of the date axis
  ;[124,262,324,386,578,702,826,1113,1175,1342,1404,1525].forEach(x => {
    dates.insertAdjacentHTML('beforeend', `<span class="absolute top-0 w-[1px] h-[4px] bg-[#a80000]" style="left:${x}px"></span>`)
  })

  // quote panel rows
  const book = (label, p, q) => `<div class="flex items-center h-[27px] pl-[2px] leading-none"><span class="flex items-center justify-between w-[198px]"><span class="text-[23px]">${label}</span><span class="text-[21px] font-bold text-[#f03030]">${p}</span></span><span class="flex-1 pr-[4px] text-right text-[21px] font-bold text-[#c0c000]">${q}<span class="text-[23px] font-normal">万</span></span></div>`
  asks.innerHTML = [['卖五 <span class="text-[20px]">¥</span>','16.44','150.8'],['卖四','16.43','88.2'],['卖三','16.42','72.2'],['卖二','16.41','88.9'],['卖一','16.40','166.8']].map(r => book(...r)).join('')
  bids.innerHTML = [['买一','16.39','107.8'],['买二','16.38','90.6'],['买三','16.37','42.4'],['买四','16.36','75.1'],['买五','16.35','88.5']].map(r => book(...r)).join('')

  const G = 'text-[#b8b8b8]', R = 'text-[#f03030]', L = 'text-[#00e600]', P = 'text-[#c000c0]'
  const stat = (h, a, b, ac, c, d, dc) => `<div class="flex items-center pl-[2px] leading-none ${h}"><span class="flex items-center justify-between w-[198px]"><span class="text-[23px]">${a}</span><span class="text-[21px] font-bold ${ac}">${b}</span></span><span class="ml-[9px] text-[23px]">${c}</span><span class="flex-1 pr-[2px] text-right text-[21px] font-bold ${dc}">${d}</span></div>`
  const yi = '<span class="text-[23px] font-normal">亿</span>'
  stats1.innerHTML = [['今开','15.97',L,'均价','16.33',R],['最高','16.59',R,'量比','1.45',R],['最低','15.90',L,'市值','71.0' + yi,G],['现量','3975',P,'总量','210551',G],['外盘','104331',R,'内盘','106220',L]]
    .map(r => stat('h-[28.75px]', r[0], r[1], r[2], r[3], r[4], r[5])).join('')
  stats2.innerHTML = [['换手','8.54%',G,'股本','4.33' + yi,G],['净资','4.86',G,'流通','2.47' + yi,G],['收益(三)','0.400',G,'PE(动)','30.5',G]]
    .map(r => stat('h-[28.5px]', r[0], r[1], r[2], r[3], r[4], r[5])).join('')

  const flowRow = (a, w, h, q, u, pct) => `<div class="flex items-center h-[28.4px] pl-[2px] leading-none text-[#00e600]"><span class="w-[140px] text-[23px] text-[#b8b8b8] whitespace-nowrap">${a}</span><span class="w-[110px]"><span class="block bg-[#00e600]" style="width:${w}px;height:${h}px"></span></span><span class="w-[90px] text-right text-[21px] whitespace-nowrap">${q}<span class="text-[23px]">${u}</span></span><span class="flex-1 pr-[2px] text-right text-[21px]">${pct}</span></div>`
  flows.innerHTML = flowRow('净流入额', 3, 10, '-814.2', '万', '-2%') + flowRow('大宗流入', 1, 10, '-122.4', '万', '-0%') + flowRow('5日净流入额', 105, 10, '-2.35', '亿', '-17%') + flowRow('5日大宗流入', 29, 10, '-6713', '万', '-5%')

  const tickData = [['14:56','16.39','12.3','B','12'],['14:56','16.39','37.9','B','14'],['14:56','16.38','22.3','S','32'],['14:56','16.39','21.5','B','20'],['14:56','16.39','4.3','B','8'],['14:56','16.38','6.4','S','4'],['14:56','16.39','52.6','B','18'],['14:56','16.39','3.0','S','6'],['14:56','16.39','9.3','S','6'],['14:56','16.40','5.6','B','8'],['14:56','16.39','24.7','S','7'],['14:56','16.40','19.4','B','12'],['14:56','16.40','1.1','B','4'],['14:56','16.40','3.6','B','7'],['14:56','16.40','2.6','B','7'],['14:56','16.40','10.7','B','14'],['14:56','16.39','13.4','S','16'],['14:56','16.40','10.8','B','11'],['14:56','16.39','2.6','S','3'],['14:57','16.40','10.8','B','9'],['15:00','16.39','651.5','','439']]
  ticks.innerHTML = tickData.map(t => `<div class="flex items-center h-[27px] pl-[2px] text-[21px] font-bold leading-none"><span class="w-[198px] flex justify-between"><span>${t[0]}</span><span class="text-[#f03030]">${t[1]}</span></span><span class="w-[118px] text-right ${t[4] == '439' ? 'text-[#d000d0]' : 'text-[#c0c000]'}">${t[2]}<span class="text-[23px] font-normal">万</span></span><span class="w-[42px] pl-[24px] font-normal ${t[3] == 'B' ? 'text-[#f02020]' : 'text-[#00e000]'}">${t[3]}</span><span class="flex-1 pr-[3px] text-right text-[#909090]">${t[4]}</span></div>`).join('')
</script>
</body>
</html>
